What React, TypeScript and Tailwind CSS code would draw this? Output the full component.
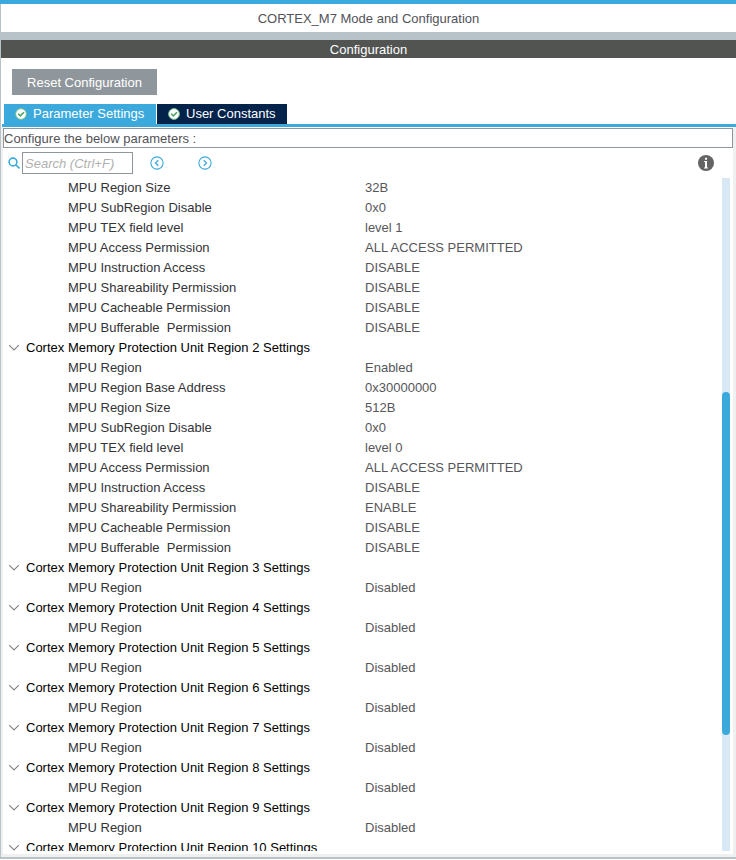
import { useState } from "react";

interface Param {
  name: string;
  value: string;
}

interface Section {
  title?: string;
  params: Param[];
}

const regionTitle = (n: number) => `Cortex Memory Protection Unit Region ${n} Settings`;

const sections: Section[] = [
  {
    params: [
      { name: "MPU Region Size", value: "32B" },
      { name: "MPU SubRegion Disable", value: "0x0" },
      { name: "MPU TEX field level", value: "level 1" },
      { name: "MPU Access Permission", value: "ALL ACCESS PERMITTED" },
      { name: "MPU Instruction Access", value: "DISABLE" },
      { name: "MPU Shareability Permission", value: "DISABLE" },
      { name: "MPU Cacheable Permission", value: "DISABLE" },
      { name: "MPU Bufferable  Permission", value: "DISABLE" },
    ],
  },
  {
    title: regionTitle(2),
    params: [
      { name: "MPU Region", value: "Enabled" },
      { name: "MPU Region Base Address", value: "0x30000000" },
      { name: "MPU Region Size", value: "512B" },
      { name: "MPU SubRegion Disable", value: "0x0" },
      { name: "MPU TEX field level", value: "level 0" },
      { name: "MPU Access Permission", value: "ALL ACCESS PERMITTED" },
      { name: "MPU Instruction Access", value: "DISABLE" },
      { name: "MPU Shareability Permission", value: "ENABLE" },
      { name: "MPU Cacheable Permission", value: "DISABLE" },
      { name: "MPU Bufferable  Permission", value: "DISABLE" },
    ],
  },
  ...[3, 4, 5, 6, 7, 8, 9].map((n) => ({
    title: regionTitle(n),
    params: [{ name: "MPU Region", value: "Disabled" }],
  })),
  { title: regionTitle(10), params: [] },
];

const scroll = { start: 31.8, size: 51 };

const CheckBadge = () => (
  <svg viewBox="0 0 12 12" className="size-3 shrink-0" aria-hidden="true">
    <circle cx="6" cy="6" r="5.4" fill="#fff" stroke="#6fc08b" strokeWidth="1" />
    <path d="M3.2 5.8 5.3 7.9 9 4.2" fill="none" stroke="#4aa564" strokeWidth="1.5" />
  </svg>
);

const StepIcon = ({ d }: { d: string }) => (
  <svg viewBox="0 0 14 14" className="size-3.5" fill="none" stroke="#3ba9dc" aria-hidden="true">
    <circle cx="7" cy="7" r="6.1" strokeWidth="1.1" />
    <path d={d} strokeWidth="1.3" />
  </svg>
);

const Chevron = ({ open }: { open: boolean }) => (
  <svg
    viewBox="0 0 12 8"
    className={open ? "h-2 w-3 shrink-0" : "h-2 w-3 shrink-0 -rotate-90"}
    fill="none"
    stroke="#808285"
    strokeWidth="1.1"
    aria-hidden="true"
  >
    <path d="M1.2 1.2 6 6 10.8 1.2" />
  </svg>
);

const ParamSection = ({ title, params }: Section) => {
  const [open, setOpen] = useState(true);

  return (
    <tbody>
      {title && (
        <tr>
          <th colSpan={2} className="h-5 p-0 text-left font-normal text-black">
            <button
              onClick={() => setOpen(!open)}
              aria-expanded={open}
              className="flex h-5 items-center gap-1.5 pl-[5px] whitespace-nowrap"
            >
              <Chevron open={open} />
              {title}
            </button>
          </th>
        </tr>
      )}
      {open &&
        params.map((p) => (
          <tr key={p.name}>
            <th className="h-5 p-0 pl-[65px] text-left font-normal whitespace-pre text-[#333336]">
              {p.name}
            </th>
            <td className="h-5 p-0 whitespace-nowrap text-[#56565a]">{p.value}</td>
          </tr>
        ))}
    </tbody>
  );
};

export default function App() {
  const [tab, setTab] = useState("params");

  return (
    <div className="flex h-screen flex-col bg-white pb-px font-['Liberation_Sans',Arial,sans-serif] text-[13px] leading-5 text-[#525257]">
      <div className="h-1 shrink-0 bg-[#3ba9dc]" />
      <div className="flex min-h-0 flex-1 flex-col border-b-2 border-l border-[#b8c3c9]">
        <h1 className="h-7 shrink-0 pt-px text-center leading-7">CORTEX_M7 Mode and Configuration</h1>
        <h2 className="h-[26px] shrink-0 border-t-8 border-[#b8c3c9] bg-[#525452] text-center leading-5 text-white">
          Configuration
        </h2>
        <div className="shrink-0 px-[11px] pt-[11px] pb-[9px]">
          <button className="block h-[26px] w-[145px] bg-[#90979c] pt-px text-white">Reset Configuration</button>
        </div>
        <div role="tablist" className="ml-px flex shrink-0 gap-px border-b-3 border-[#3ba9dc] pl-0.5 text-white">
          <button
            role="tab"
            aria-selected={tab === "params"}
            onClick={() => setTab("params")}
            className="flex h-5 w-[152px] items-center gap-1.5 bg-[#3ba9dc] pl-[11px]"
          >
            <CheckBadge />
            Parameter Settings
          </button>
          <button
            role="tab"
            aria-selected={tab === "constants"}
            onClick={() => setTab("constants")}
            className="flex h-5 w-[130px] items-center gap-1.5 bg-[#03234b] pl-[11px]"
          >
            <CheckBadge />
            User Constants
          </button>
        </div>
        <div className="flex min-h-0 flex-1 flex-col border-r-3 border-b-3 border-l-2 border-[#f0f0f0] pt-px pb-[3px]">
          <p className="h-5 shrink-0 border border-[#90979c] leading-5">Configure the below parameters :</p>
          <div className="flex h-[30px] shrink-0 items-center pr-[19px] pl-[5px]">
            <label htmlFor="search" aria-label="Search" className="mr-0.5">
              <svg viewBox="0 0 12 12" className="size-3" fill="none" stroke="#3ba9dc" strokeWidth="1.6" aria-hidden="true">
                <circle cx="5" cy="5" r="3.9" />
                <path d="m7.8 7.8 3.7 3.7" />
              </svg>
            </label>
            <input
              id="search"
              type="text"
              placeholder="Search (Ctrl+F)"
              className="h-[22px] w-[111px] border border-[#90979c] px-0.5 outline-none placeholder:text-[#b0b0b0] placeholder:italic"
            />
            <button aria-label="Previous match" className="ml-[17px]">
              <StepIcon d="M8.3 4.2 5.5 7l2.8 2.8" />
            </button>
            <button aria-label="Next match" className="ml-[34px]">
              <StepIcon d="M5.7 4.2 8.5 7 5.7 9.8" />
            </button>
            <button aria-label="Information" className="ml-auto">
              <svg viewBox="0 0 16 16" className="size-4" aria-hidden="true">
                <circle cx="8" cy="8" r="8" fill="#646464" />
                <path d="M7 2.8h2v2H7zM6 6h3v6.5h1v1H6v-1h1V7H6z" fill="#fff" />
              </svg>
            </button>
          </div>
          <div className="flex min-h-0 flex-1 pr-[3px]">
            <div className="min-w-0 flex-1 overflow-hidden">
              <table className="w-full table-fixed border-collapse">
                <colgroup>
                  <col className="w-[362px]" />
                  <col />
                </colgroup>
                {sections.map((s, i) => (
                  <ParamSection key={i} {...s} />
                ))}
              </table>
            </div>
            <div className="w-2 bg-[#d8e8f5]">
              <div style={{ height: `${scroll.start}%` }} />
              <div className="rounded-full bg-[#3ba9dc]" style={{ height: `${scroll.size}%` }} />
            </div>
          </div>
        </div>
      </div>
    </div>
  );
}
